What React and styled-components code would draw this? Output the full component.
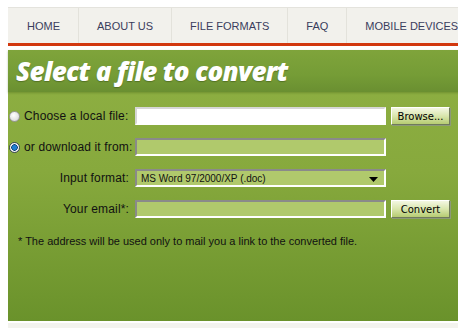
import React from "react";
import styled, { createGlobalStyle } from "styled-components";

const navItems = ["HOME", "ABOUT US", "FILE FORMATS", "FAQ", "MOBILE DEVICES"];

const App = () => {
  return (
    <>
      <GlobalStyle />
      <Page>
        <Nav>
          {navItems.map((item) => (
            <NavItem key={item}>{item}</NavItem>
          ))}
        </Nav>

        <Panel>
          <Title>
            <h1>Select a file to convert</h1>
          </Title>

          <Form>
            <Label>
              <Radio />
              <span>Choose a local file:</span>
            </Label>
            <TextBox $white />
            <Button>Browse...</Button>

            <Label>
              <Radio $checked />
              <span>or download it from:</span>
            </Label>
            <TextBox />
            <span />

            <Label $right>Input format:</Label>
            <Select>
              <span>MS Word 97/2000/XP (.doc)</span>
              <svg width="9" height="5" viewBox="0 0 9 5">
                <path d="M0 0h9L4.5 5z" fill="#000" />
              </svg>
            </Select>
            <span />

            <Label $right>Your email*:</Label>
            <TextBox />
            <Button>Convert</Button>
          </Form>

          <Note>
            * The address will be used only to mail you a link to the converted
            file.
          </Note>
        </Panel>

        <Footer />
      </Page>
    </>
  );
};

export default App;

const GlobalStyle = createGlobalStyle`
  html, body {
    margin: 0;
    overflow: hidden;
    background: #fff;
  }
  body {
    padding: 7px 0 0 8px;
    font-family: "Liberation Sans", Arial, sans-serif;
  }
`;

const Page = styled.div`
  width: 460px;
`;

// top menu
const Nav = styled.div`
  display: flex;
  height: 35px;
  background: #f2f1ec;
  border-top: 1px solid #e4e3dd;
  border-bottom: 3px solid #d2380e;
`;

const NavItem = styled.div`
  display: flex;
  align-items: center;
  padding: 1px 18px 0 18px;
  font-size: 11px;
  color: #3a3d5c;
  white-space: nowrap;
  border-right: 1px solid #e3e2db;
  &:first-child {
    padding-left: 19px;
  }
`;

// green area
const Panel = styled.div`
  margin-top: 4px;
  height: 271px;
  background: linear-gradient(180deg, #8fb043 0%, #87a93d 45%, #6a922b 100%);
`;

const Title = styled.div`
  height: 42px;
  display: flex;
  align-items: center;
  padding-left: 8px;
  background: linear-gradient(180deg, #7fa43b 0%, #759c36 60%, #6a8f31 100%);
  box-shadow: 0 1px 2px rgba(60, 90, 20, 0.35);
  h1 {
    margin: 0;
    font-family: "Open Sans", sans-serif;
    font-weight: 800;
    font-style: italic;
    font-size: 26px;
    letter-spacing: -0.7px;
    color: #fff;
    text-shadow: 0 1px 1px rgba(40, 60, 10, 0.4);
  }
`;

const Form = styled.div`
  display: grid;
  grid-template-columns: 122px 251px 59px;
  grid-auto-rows: 18px;
  column-gap: 5px;
  row-gap: 13px;
  align-items: center;
  padding: 15px 0 0 0;
`;

const Label = styled.div`
  display: flex;
  align-items: center;
  justify-content: ${(p) => (p.$right ? "flex-end" : "flex-start")};
  gap: 4px;
  padding-right: ${(p) => (p.$right ? "1px" : "0")};
  font-size: 12px;
  letter-spacing: 0.15px;
  color: #111;
  white-space: nowrap;
`;

const Radio = styled.span`
  width: 9px;
  height: 9px;
  margin-left: 1px;
  border-radius: 50%;
  flex: none;
  border: 1px solid ${(p) => (p.$checked ? "#3c4a5a" : "#9a9a9a")};
  background: ${(p) =>
    p.$checked
      ? "radial-gradient(circle, #1f7fd0 0 2px, #0d3f78 3px, #f4f4f4 3.5px)"
      : "radial-gradient(circle at 40% 35%, #ffffff 0, #e4e4e4 60%, #c8c8c8 100%)"};
`;

const TextBox = styled.div`
  height: 18px;
  box-sizing: border-box;
  background: ${(p) => (p.$white ? "#fff" : "#b0c96c")};
  border: 2px solid #fff;
  border-top-color: ${(p) => (p.$white ? "#d6d6d6" : "#8a8a8a")};
  border-left-color: ${(p) => (p.$white ? "#d6d6d6" : "#8a8a8a")};
`;

const Select = styled(TextBox)`
  display: flex;
  align-items: center;
  justify-content: space-between;
  padding: 0 6px 0 4px;
  font-size: 10px;
  color: #111;
  svg {
    margin-top: 2px;
  }
`;

const Button = styled.div`
  height: 18px;
  box-sizing: border-box;
  display: flex;
  align-items: center;
  justify-content: center;
  font-family: "DejaVu Sans", sans-serif;
  font-size: 10px;
  color: #000;
  background: linear-gradient(180deg, #f3f7e2 0%, #d9e6ad 50%, #b6cc72 100%);
  border: 1px solid #fff;
  border-right-color: #6f7a5c;
  border-bottom-color: #6f7a5c;
  box-shadow: 1px 1px 0 #8d9a78;
`;

const Note = styled.p`
  margin: 17px 0 0 10px;
  font-size: 11px;
  color: #111;
`;

const Footer = styled.div`
  margin-top: 2px;
  height: 6px;
  background: #f3f3ee;
`;
